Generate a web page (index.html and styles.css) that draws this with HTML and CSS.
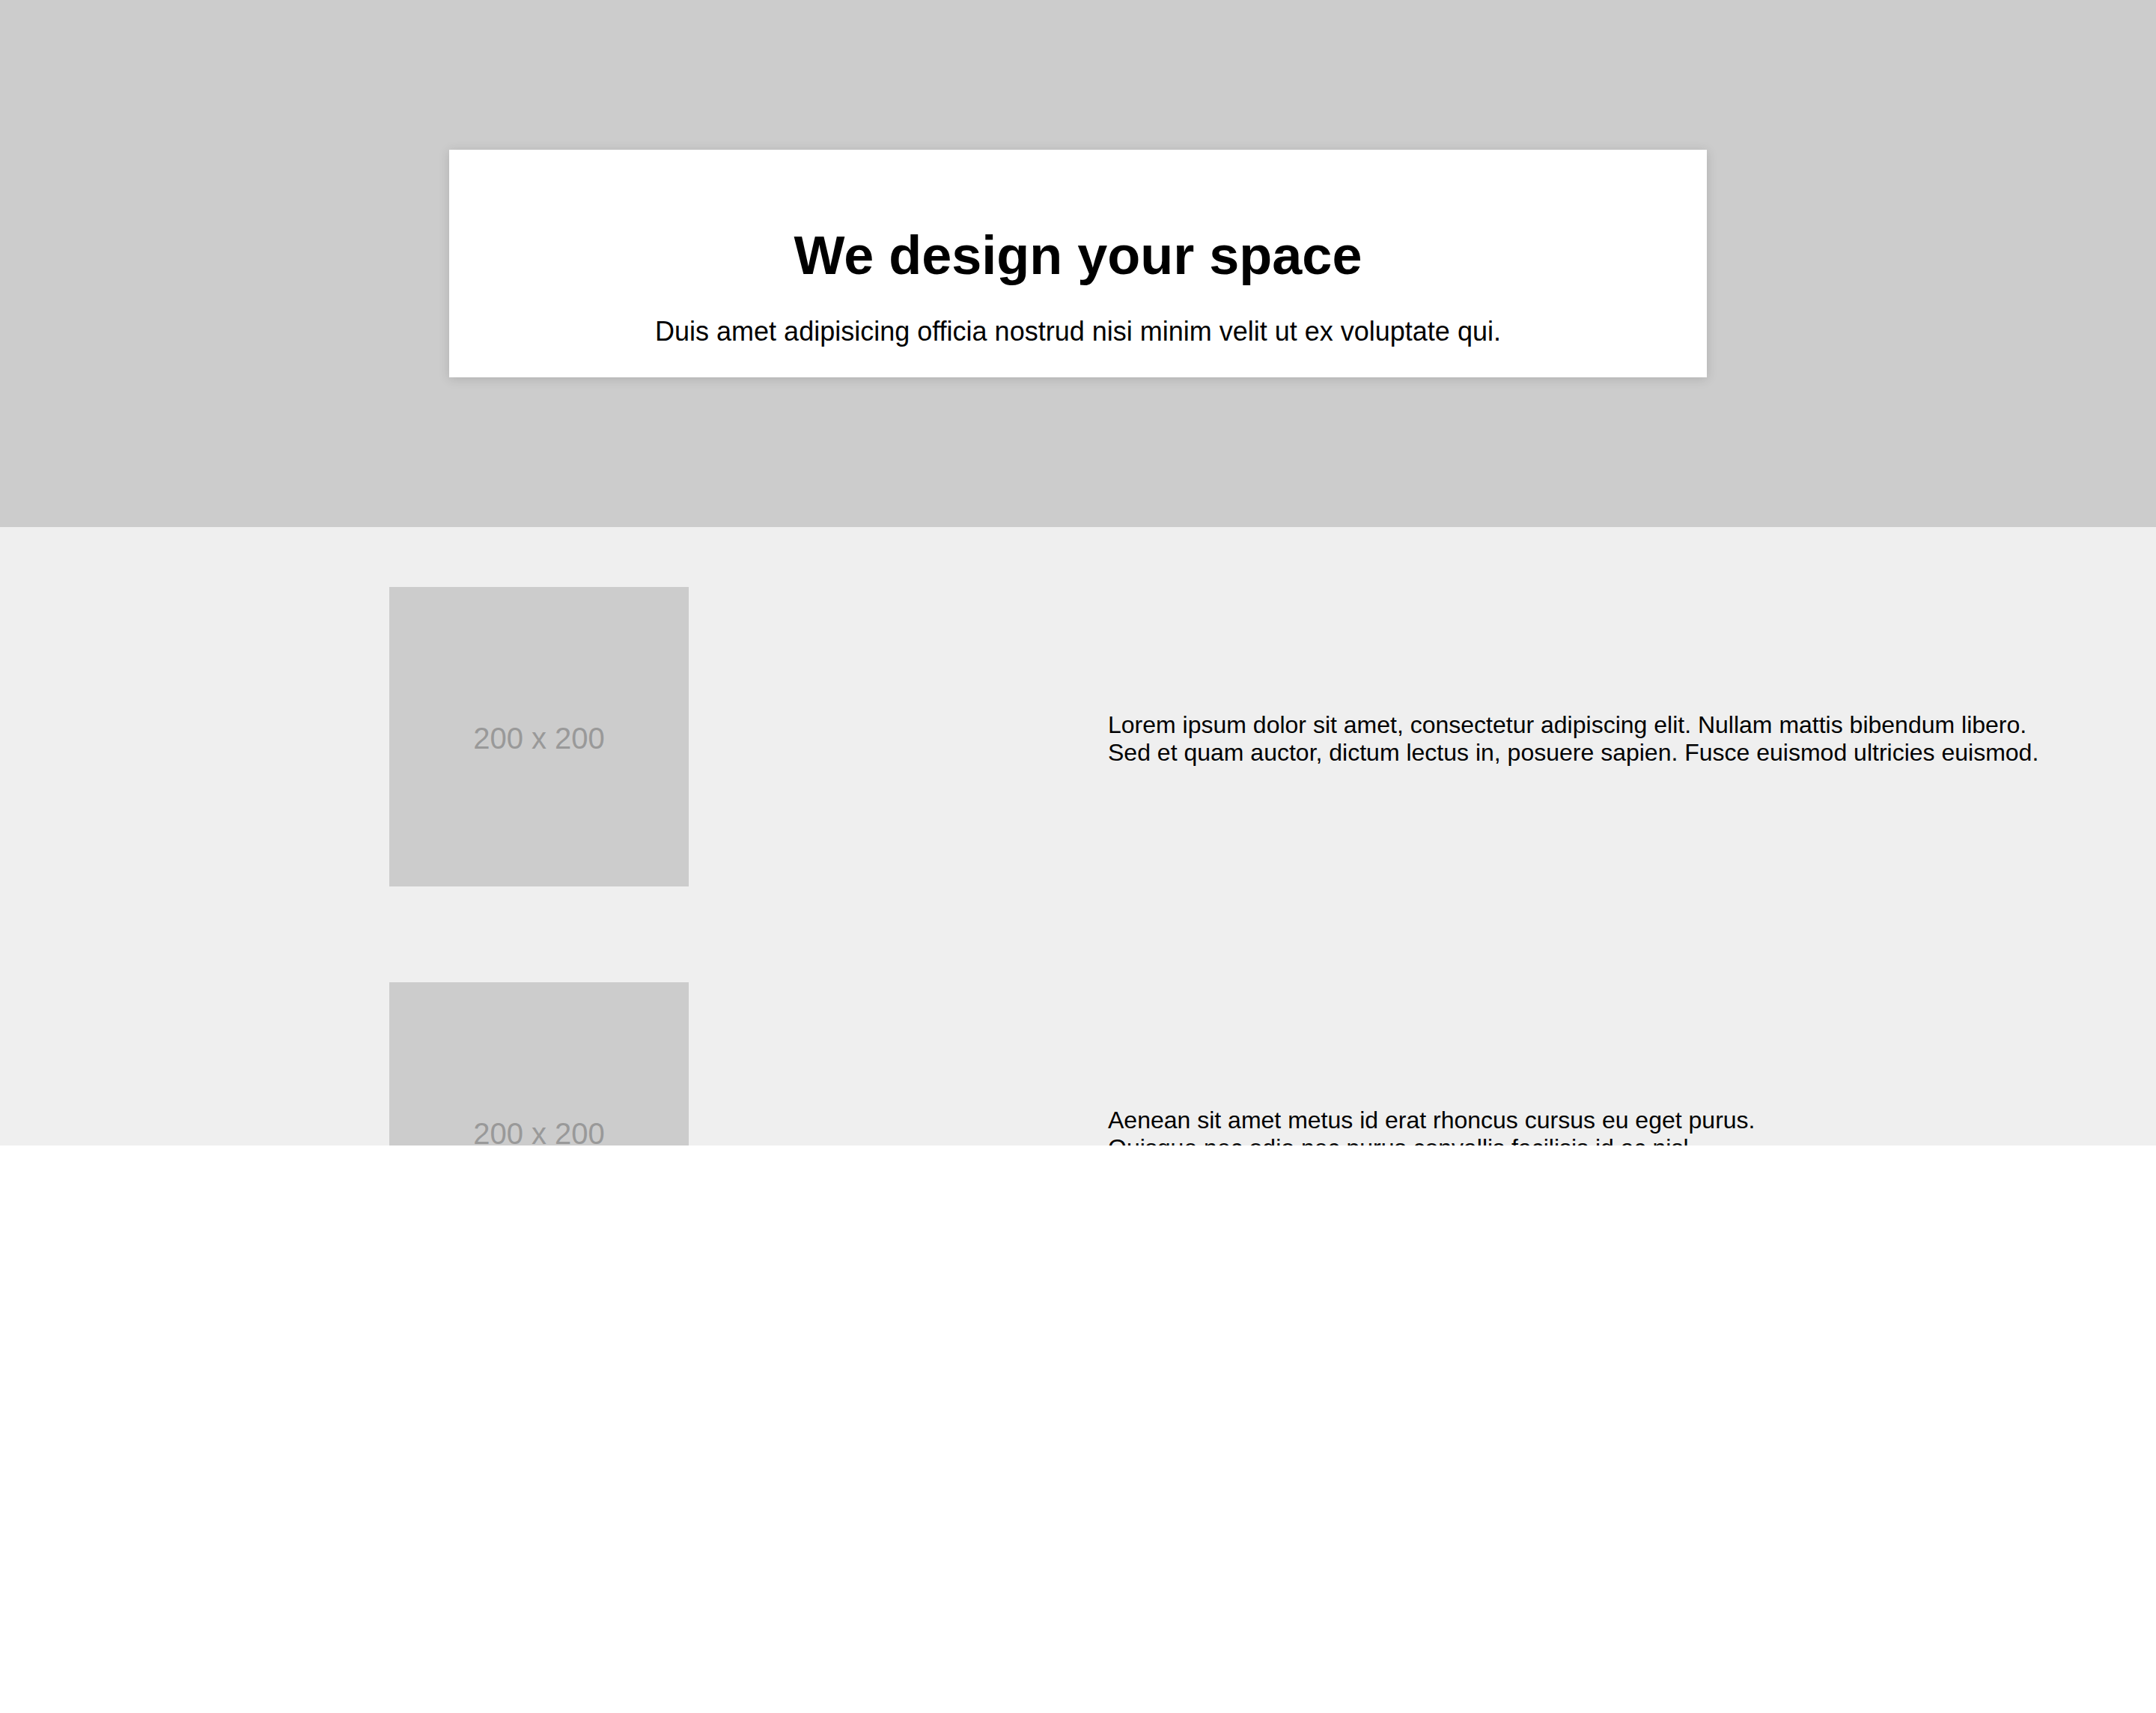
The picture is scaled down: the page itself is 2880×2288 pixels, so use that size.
FILE: index.html
```html
<!DOCTYPE html>
<html lang="en">
<head>
<meta charset="utf-8">
<title>We design your space</title>
<link rel="stylesheet" href="styles.css">
</head>
<body>
<div class="page">
  <header class="hero">
    <div class="hero-card">
      <h1 class="hero-title">We design your space</h1>
      <p class="hero-sub">Duis amet adipisicing officia nostrud nisi minim velit ut ex voluptate qui.</p>
    </div>
  </header>
  <section class="features">
    <div class="feature">
      <div class="feature-media"><div class="placeholder">200 x 200</div></div>
      <div class="feature-text"><p>Lorem ipsum dolor sit amet, consectetur adipiscing elit. Nullam mattis bibendum libero.<br>Sed et quam auctor, dictum lectus in, posuere sapien. Fusce euismod ultricies euismod.</p></div>
    </div>
    <div class="feature">
      <div class="feature-media"><div class="placeholder">200 x 200</div></div>
      <div class="feature-text"><p>Aenean sit amet metus id erat rhoncus cursus eu eget purus.<br>Quisque nec odio nec purus convallis facilisis id ac nisl.</p></div>
    </div>
  </section>
</div>
</body>
</html>
```
FILE: styles.css
```css
html, body {
  margin: 0;
  padding: 0;
  background: #ffffff;
}
body {
  font-family: "Liberation Sans", Arial, sans-serif;
  color: #000;
}
.page {
  height: 1530px;
  overflow: hidden;
  background: #efefef;
}
.hero {
  height: 704px;
  background: #cccccc;
  display: flex;
  align-items: center;
  justify-content: center;
}
.hero-card {
  width: 1680px;
  height: 304px;
  box-sizing: border-box;
  background: #fff;
  box-shadow: 0 2px 14px rgba(0, 0, 0, 0.14);
  text-align: center;
  padding-top: 100px;
}
.hero-title {
  margin: 0;
  font-size: 72px;
  font-weight: bold;
  line-height: normal;
}
.hero-sub {
  margin: 40px 0 0;
  font-size: 36px;
  line-height: normal;
}
.features {
  padding-top: 80px;
  display: flex;
  flex-direction: column;
  gap: 128px;
}
.feature {
  display: grid;
  grid-template-columns: 1fr 1fr;
  align-items: center;
}
.feature-media {
  display: flex;
  justify-content: center;
}
.placeholder {
  width: 400px;
  height: 400px;
  box-sizing: border-box;
  padding-top: 4px;
  background: #cccccc;
  color: #999999;
  font-size: 40px;
  display: flex;
  align-items: center;
  justify-content: center;
}
.feature-text {
  padding-left: 40px;
  padding-top: 6px;
}
.feature-text p {
  margin: 0;
  font-size: 32px;
  line-height: normal;
}
```
